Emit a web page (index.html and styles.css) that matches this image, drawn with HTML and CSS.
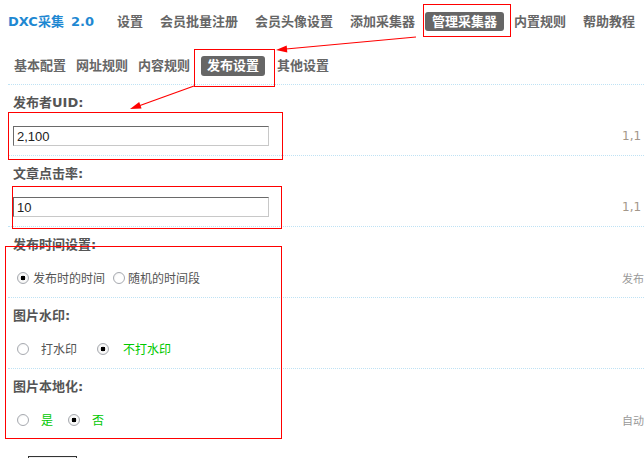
FILE: index.html
```html
<!DOCTYPE html>
<html lang="zh-CN">
<head>
<meta charset="utf-8">
<title>DXC采集 2.0 - 发布设置</title>
<link rel="stylesheet" href="styles.css">
</head>
<body>
<div class="page">
  <header class="topnav">
    <div class="brand">DXC采集<span class="ver">2.0</span></div>
    <nav class="nav">
      <a class="nav-item">设置</a>
      <a class="nav-item">会员批量注册</a>
      <a class="nav-item">会员头像设置</a>
      <a class="nav-item">添加采集器</a>
      <a class="nav-item active">管理采集器</a>
      <a class="nav-item">内置规则</a>
      <a class="nav-item">帮助教程</a>
    </nav>
  </header>

  <nav class="subnav">
    <a class="sub-item">基本配置</a>
    <a class="sub-item">网址规则</a>
    <a class="sub-item">内容规则</a>
    <a class="sub-item active">发布设置</a>
    <a class="sub-item">其他设置</a>
  </nav>

  <form class="form">
    <div class="row">
      <div class="label">发布者UID:</div>
      <div class="field">
        <input class="text" type="text" value="2,100">
        <span class="tip num">1,1</span>
      </div>
    </div>
    <div class="row">
      <div class="label">文章点击率:</div>
      <div class="field">
        <input class="text" type="text" value="10">
        <span class="tip num">1,1</span>
      </div>
    </div>
    <div class="row">
      <div class="label">发布时间设置:</div>
      <div class="field radios">
        <input class="rb first" type="radio" name="ptime" checked><span class="opt gap4">发布时的时间</span>
        <input class="rb gap8" type="radio" name="ptime"><span class="opt gap3">随机的时间段</span>
        <span class="tip">发布</span>
      </div>
    </div>
    <div class="row">
      <div class="label">图片水印:</div>
      <div class="field radios">
        <input class="rb first" type="radio" name="wm"><span class="opt gap12">打水印</span>
        <input class="rb gap20" type="radio" name="wm" checked><span class="opt green gap14">不打水印</span>
      </div>
    </div>
    <div class="row last">
      <div class="label">图片本地化:</div>
      <div class="field radios">
        <input class="rb first" type="radio" name="loc"><span class="opt green gap12">是</span>
        <input class="rb gap15" type="radio" name="loc" checked><span class="opt green gap12">否</span>
        <span class="tip">自动</span>
      </div>
    </div>
    <div class="actions">
      <button class="submit" type="button" aria-label="提交"></button>
    </div>
  </form>
</div>

<svg class="annot" width="644" height="458" viewBox="0 0 644 458" xmlns="http://www.w3.org/2000/svg">
  <g fill="none" stroke="#ff0000" stroke-width="1" shape-rendering="crispEdges">
    <rect x="423.5" y="4.5" width="87" height="32"/>
    <rect x="194.5" y="49.5" width="80" height="37"/>
    <rect x="8.5" y="112.5" width="274" height="47"/>
    <rect x="12.5" y="186.5" width="269" height="42"/>
    <rect x="5.5" y="246.5" width="276" height="192"/>
  </g>
  <g stroke="#ff0000" stroke-width="1.2" fill="none">
    <line x1="416" y1="37" x2="286" y2="49"/>
    <line x1="194" y1="86" x2="140" y2="105.5"/>
  </g>
  <g fill="#ff0000">
    <polygon points="276,50 287.3,52.5 286.7,45.5"/>
    <polygon points="130,109 141.6,108.6 139.2,102"/>
  </g>
</svg>
</body>
</html>
```

FILE: styles.css
```css
html, body {
  margin: 0;
  padding: 0;
  overflow: hidden;
  background: #ffffff;
}

body {
  position: relative;
  width: 644px;
  height: 458px;
  font-family: "DejaVu Sans", "Noto Sans CJK SC", sans-serif;
  font-size: 12px;
  color: #555555;
}

.page {
  padding-left: 8px;
}

/* top navigation */
.topnav {
  display: flex;
  align-items: center;
  height: 43px;
}

.brand {
  font-size: 13px;
  font-weight: bold;
  color: #1e88d2;
  line-height: 19px;
  white-space: nowrap;
}

.brand .ver {
  margin-left: 7px;
}

.nav {
  display: flex;
  gap: 3px;
  margin-left: 16px;
}

.nav-item {
  padding: 0 7px;
  font-size: 13px;
  font-weight: bold;
  line-height: 19px;
  color: #666666;
  white-space: nowrap;
  border-radius: 3px;
}

.nav-item.active,
.sub-item.active {
  background: #666666;
  color: #ffffff;
}

/* sub navigation */
.subnav {
  display: flex;
  padding: 13px 0 8px 1px;
  border-bottom: 1px dotted #bfe2f4;
}

.sub-item {
  padding: 0 5px;
  font-size: 13px;
  font-weight: bold;
  line-height: 20px;
  color: #666666;
  white-space: nowrap;
  border-radius: 3px;
}

.sub-item.active {
  padding: 0 6px;
  margin: 0 7px 0 6px;
}

/* form rows */
.row {
  padding: 10px 0 9px 5px;
  border-bottom: 1px dotted #bfe2f4;
}

.row.last {
  border-bottom: 0;
}

.label {
  font-size: 13px;
  font-weight: bold;
  line-height: 16px;
  color: #555555;
  white-space: nowrap;
}

.field {
  display: flex;
  align-items: center;
  height: 20px;
  margin-top: 15px;
}

.text {
  box-sizing: border-box;
  width: 256px;
  height: 20px;
  margin: 0;
  padding: 0 3px;
  border-style: solid;
  border-width: 1px;
  border-color: #6a6a6a #c8c8c8 #c8c8c8 #6a6a6a;
  font-family: "Liberation Sans", "Noto Sans CJK SC", sans-serif;
  font-size: 13px;
  color: #222222;
  outline: none;
}

.tip {
  margin-left: auto;
  width: 22px;
  flex-shrink: 0;
  white-space: nowrap;
  font-size: 11px;
  color: #999999;
}

.tip.num {
  font-family: "DejaVu Sans", sans-serif;
  font-size: 12px;
  color: #a3978a;
}

.radios {
  padding-left: 4px;
}

.rb {
  appearance: none;
  -webkit-appearance: none;
  box-sizing: border-box;
  width: 12px;
  height: 12px;
  margin: 0;
  flex-shrink: 0;
  border: 1px solid #a7aab0;
  border-radius: 50%;
  background: radial-gradient(circle at 60% 60%, #ffffff 0 50%, #e6e6e6 100%);
}

.rb:checked {
  background: radial-gradient(circle at center, #000000 0 2.2px, #ffffff 2.6px, #e4e4e4 100%);
}

.opt {
  font-family: "Noto Sans CJK SC", sans-serif;
  font-size: 12px;
  line-height: 16px;
  color: #555555;
  white-space: nowrap;
}

.opt.green {
  color: #00c800;
}

.gap3 { margin-left: 3px; }
.gap4 { margin-left: 4px; }
.gap8 { margin-left: 8px; }
.gap12 { margin-left: 12px; }
.gap14 { margin-left: 14px; }
.gap15 { margin-left: 15px; }
.gap20 { margin-left: 20px; }

.actions {
  padding: 17px 0 0 20px;
}

.submit {
  width: 49px;
  height: 22px;
  margin: 0;
  border: 1px solid #333333;
  background: #f0f0f0;
}

/* annotation overlay */
.annot {
  position: absolute;
  left: 0;
  top: 0;
  pointer-events: none;
}
```
